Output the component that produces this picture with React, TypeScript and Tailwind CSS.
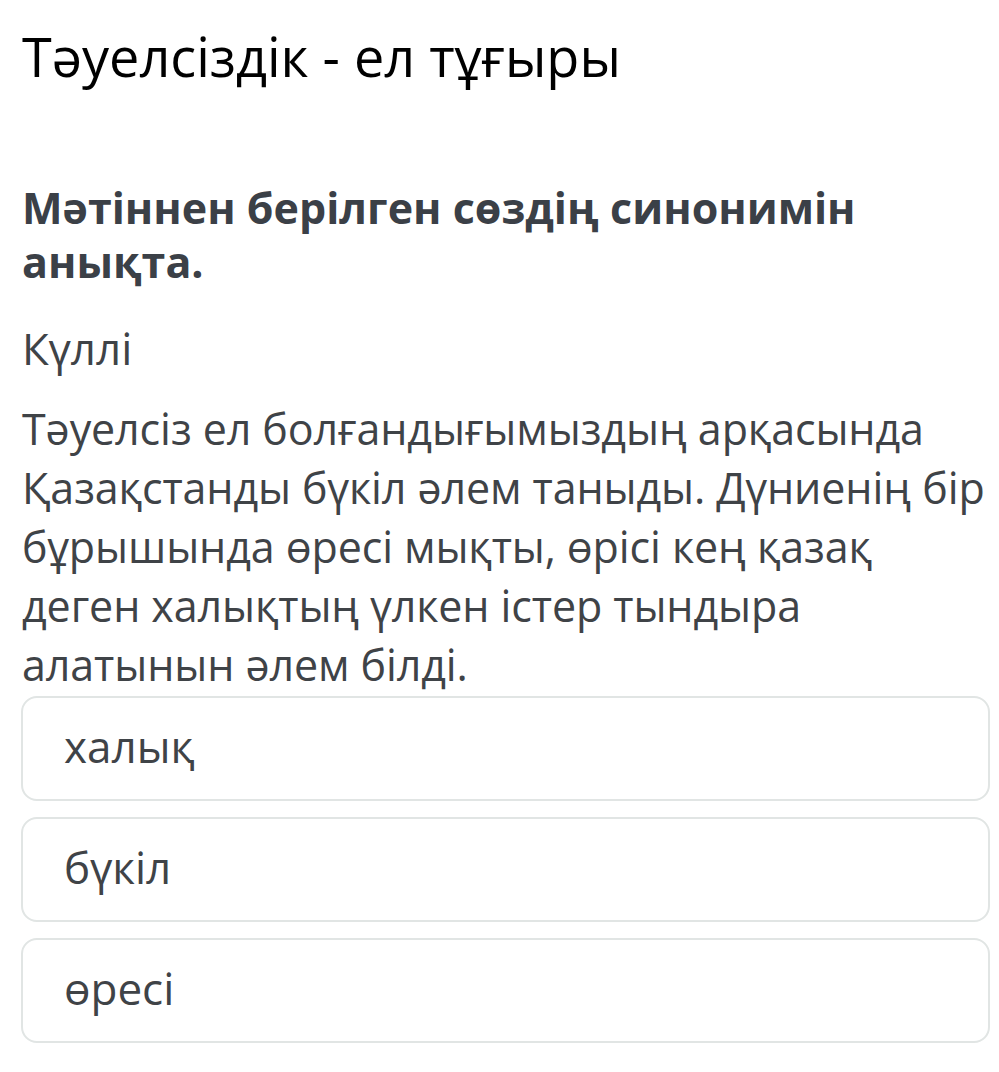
const options = ["халық", "бүкіл", "өресі"];

export default function App() {
  return (
    <div className="min-h-screen bg-white pl-[21px] pr-[5px] font-['Open_Sans',sans-serif]">
      <h1 className="pt-[24px] pl-px text-[54px] leading-[64px] font-normal text-black">
        Тәуелсіздік - ел тұғыры
      </h1>

      <h2 className="mt-[93px] pl-px pr-[4px] text-[43px] leading-[54px] font-bold text-[#3b4047]">
        Мәтіннен берілген сөздің синонимін анықта.
      </h2>

      <p className="mt-[30px] pl-px text-[44px] leading-[59px] text-[#3f4347]">Күллі</p>

      <p className="mt-[21px] pl-px text-[43px] leading-[59px] tracking-[-0.1px] text-[#3f4347]">
        Тәуелсіз ел болғандығымыздың арқасында Қазақстанды бүкіл әлем таныды. Дүниенің бір бұрышында өресі мықты, өрісі кең қазақ деген халықтың үлкен істер тындыра алатынын әлем білді.
      </p>

      <div className="mt-[2px] mr-[4px] flex flex-col gap-4">
        {options.map((o) => (
          <div
            key={o}
            className="h-[105px] rounded-[16px] border-2 border-[#e1e5e4] bg-white pl-[41px] pt-[19px] text-[44px] leading-[59px] text-[#3f4347]"
          >
            {o}
          </div>
        ))}
      </div>
    </div>
  );
}
